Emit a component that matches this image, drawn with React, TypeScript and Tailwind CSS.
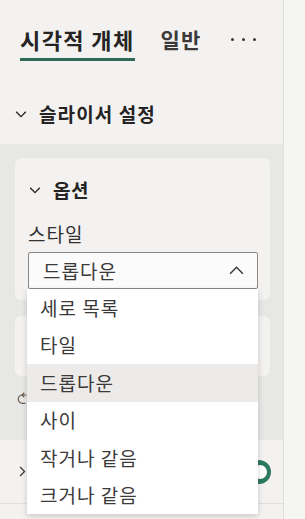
const font = { fontFamily: '"Noto Sans CJK KR", "Noto Sans", sans-serif' };

function ChevronDown({ className = "" }: { className?: string }) {
  return (
    <svg viewBox="0 0 16 16" className={className} fill="none" stroke="currentColor" strokeWidth="1.6">
      <path d="M2.5 5.5 8 11l5.5-5.5" />
    </svg>
  );
}

export default function App() {
  const options = ["세로 목록", "타일", "드롭다운", "사이", "작거나 같음", "크거나 같음"];

  return (
    <div className="relative flex w-[305px] h-[519px] overflow-hidden bg-[#f5f5f4] text-[#252423]" style={font}>
      <div className="flex flex-col w-[284px] shrink-0 border-r border-[#e1dfdd] bg-[#f3f2f1]">
        {/* tabs */}
        <div className="h-[144px] flex flex-col">
          <div className="flex items-start pl-[20px] pt-[26px] h-[62px]">
            <div className="flex flex-col">
              <span className="text-[22px] leading-[26px] font-bold tracking-[1.4px]">시각적 개체</span>
              <div className="mt-[6px] h-[3px] bg-[#2e6b56]" />
            </div>
            <span className="ml-[26px] text-[21px] leading-[26px] font-bold tracking-[1px] text-[#3b3a39]">일반</span>
            <div className="ml-[30px] mt-[12px] flex gap-[8px]">
              <span className="w-[3px] h-[3px] rounded-full bg-[#3b3a39]" />
              <span className="w-[3px] h-[3px] rounded-full bg-[#3b3a39]" />
              <span className="w-[3px] h-[3px] rounded-full bg-[#3b3a39]" />
            </div>
          </div>
          <div className="flex items-center pl-[14px] mt-[40px]">
            <ChevronDown className="w-[14px] h-[14px]" />
            <span className="ml-[11px] text-[19px] leading-[24px] font-bold tracking-[1.1px]">슬라이서 설정</span>
          </div>
        </div>

        {/* gray area with cards */}
        <div className="h-[296px] bg-[#e7e7e6] pl-[15px] pr-[13px] pt-[14px] flex flex-col">
          <div className="h-[142px] rounded-[6px] bg-[#f3f2f1] pl-[13px] pr-[12px] flex flex-col">
            <div className="flex items-center mt-[20px]">
              <ChevronDown className="w-[14px] h-[14px]" />
              <span className="ml-[11px] text-[19px] leading-[24px] font-bold tracking-[0.5px]">옵션</span>
            </div>
            <span className="mt-[20px] text-[19px] leading-[24px] tracking-[1px] text-[#323130]">스타일</span>
            <div className="mt-[6px] h-[37px] border border-[#8a8886] rounded-[2px] bg-[#fbfbfb] flex items-center justify-between pl-[14px] pr-[12px]">
              <span className="text-[19px] leading-[24px] tracking-[1px] text-[#3b3a39]">드롭다운</span>
              <svg viewBox="0 0 16 16" className="w-[17px] h-[17px] text-[#3b3a39]" fill="none" stroke="currentColor" strokeWidth="1.4">
                <path d="M2 11 8 5l6 6" />
              </svg>
            </div>
          </div>
          <div className="mt-[16px] h-[60px] rounded-[6px] bg-[#f3f2f1]" />
          <div className="mt-[14px] pl-[2px] text-[#6b5a4a]">
            <svg viewBox="0 0 16 16" className="w-[16px] h-[19px]" fill="none" stroke="currentColor" strokeWidth="1.2">
              <path d="M9.5 3.5H5.5a4.2 4.2 0 0 0 0 8.4H8.5" />
              <path d="M7.3 1.3 5 3.5l2.3 2.2" />
            </svg>
          </div>
        </div>

        {/* collapsed section */}
        <div className="h-[64px] border-b border-[#e1dfdd] flex items-center justify-between pl-[16px] pr-[12px]">
          <svg viewBox="0 0 16 16" className="w-[13px] h-[15px] text-[#3b3a39]" fill="none" stroke="currentColor" strokeWidth="1.6">
            <path d="M5 2.5 10.5 8 5 13.5" />
          </svg>
          <div className="w-[44px] h-[24px] rounded-full bg-[#2d7a5f] flex items-center justify-end pr-[4px]">
            <span className="w-[14px] h-[14px] rounded-full bg-white" />
          </div>
        </div>
      </div>

      {/* open dropdown list */}
      <div className="absolute left-[27px] top-[289px] w-[231px] bg-white shadow-[0_2px_6px_rgba(0,0,0,0.18)] flex flex-col">
        {options.map((o) => (
          <div
            key={o}
            className={
              "h-[37.5px] flex items-center pl-[13px] text-[19px] leading-[24px] tracking-[1px] text-[#3b3a39] " +
              (o === "드롭다운" ? "bg-[#edebe9]" : "")
            }
          >
            {o}
          </div>
        ))}
      </div>
    </div>
  );
}
